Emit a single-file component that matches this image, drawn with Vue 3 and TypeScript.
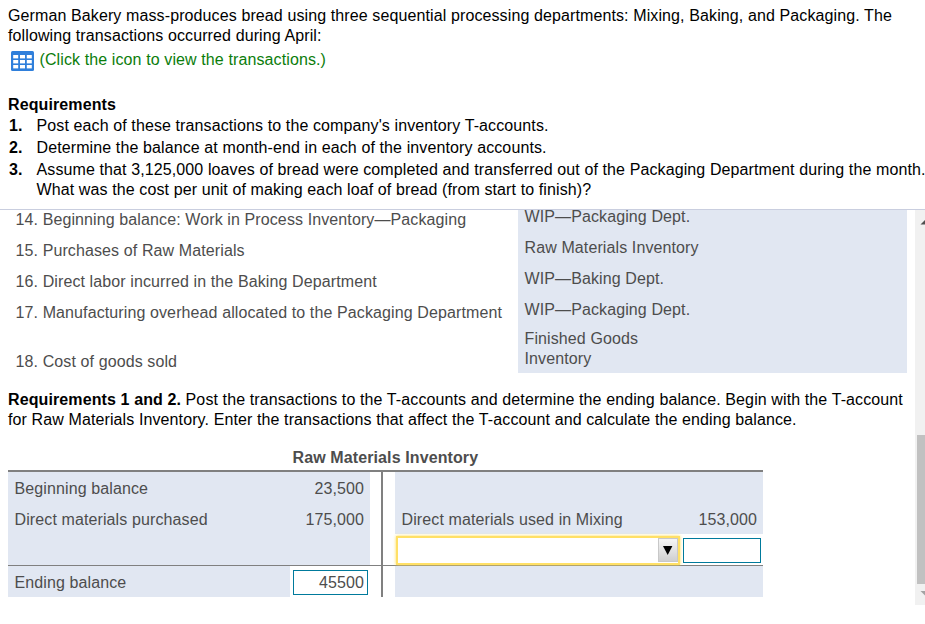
<script setup lang="ts">
import { ref } from 'vue'

interface Transaction {
  label: string
  account: string[]
}

const requirements: string[][] = [
  ["Post each of these transactions to the company's inventory T-accounts."],
  ['Determine the balance at month-end in each of the inventory accounts.'],
  [
    'Assume that 3,125,000 loaves of bread were completed and transferred out of the Packaging Department during the month.',
    'What was the cost per unit of making each loaf of bread (from start to finish)?',
  ],
]

const transactions: Transaction[] = [
  { label: '14. Beginning balance: Work in Process Inventory—Packaging', account: ['WIP—Packaging Dept.'] },
  { label: '15. Purchases of Raw Materials', account: ['Raw Materials Inventory'] },
  { label: '16. Direct labor incurred in the Baking Department', account: ['WIP—Baking Dept.'] },
  { label: '17. Manufacturing overhead allocated to the Packaging Department', account: ['WIP—Packaging Dept.'] },
  { label: '18. Cost of goods sold', account: ['Finished Goods', 'Inventory'] },
]

const endingBalance = ref('45500')
const creditAmount = ref('')
</script>

<template>
  <div class="page">
    <header class="problem">
      <p class="para">
        German Bakery mass-produces bread using three sequential processing departments: Mixing, Baking, and Packaging. The<br />
        following transactions occurred during April:
      </p>
      <div class="link">
        <svg class="grid-icon" width="23" height="20" viewBox="0 0 23 20">
          <rect width="23" height="20" rx="1.5" fill="#2f7fdb" />
          <g fill="#fff">
            <template v-for="y in [4, 9, 14]" :key="y">
              <rect v-for="x in [2.2, 9, 15.8]" :key="x" :x="x" :y="y" width="5" height="3.4" />
            </template>
          </g>
        </svg>
        <span>(Click the icon to view the transactions.)</span>
      </div>
      <h2 class="heading">Requirements</h2>
      <ol class="reqs">
        <li v-for="(lines, i) in requirements" :key="i">
          <b>{{ i + 1 }}.</b>
          <div><div v-for="line in lines" :key="line">{{ line }}</div></div>
        </li>
      </ol>
    </header>

    <div class="work">
      <main class="content">
        <div class="transactions">
          <div v-for="t in transactions" :key="t.label" class="trow">
            <div class="tlabel">{{ t.label }}</div>
            <div class="taccount"><div v-for="a in t.account" :key="a">{{ a }}</div></div>
          </div>
        </div>

        <p class="instructions">
          <b>Requirements 1 and 2.</b> Post the transactions to the T-accounts and determine the ending balance. Begin with the T-account<br />
          for Raw Materials Inventory. Enter the transactions that affect the T-account and calculate the ending balance.
        </p>

        <section class="account">
          <h3>Raw Materials Inventory</h3>
          <div class="ledger">
            <div class="side entries debit">
              <div class="line"><span>Beginning balance</span><span>23,500</span></div>
              <div class="line"><span>Direct materials purchased</span><span>175,000</span></div>
            </div>
            <div class="stem"></div>
            <div class="side entries credit">
              <div class="line"></div>
              <div class="line"><span>Direct materials used in Mixing</span><span>153,000</span></div>
              <div class="entry">
                <div class="select"><button type="button"><svg width="10" height="9" viewBox="0 0 10 9"><path d="M0 0H9.4L4.7 9Z" /></svg></button></div>
                <input v-model="creditAmount" />
              </div>
            </div>
          </div>
          <div class="ledger total">
            <div class="side debit">
              <div class="ending">Ending balance</div>
              <div class="answer"><input v-model="endingBalance" /></div>
            </div>
            <div class="stem"></div>
            <div class="side credit"></div>
          </div>
        </section>
      </main>
      <div class="scrollbar">
        <div class="arrow"><svg width="10" height="20"><path d="M5.5 14.5L10 10V14.5Z" fill="#505050" /></svg></div>
        <div class="track"></div>
        <div class="thumb"></div>
        <div class="arrow"><svg width="10" height="21"><path d="M5.5 7H10V11.5Z" fill="#a3a3a3" /></svg></div>
      </div>
    </div>
  </div>
</template>

<style>
body { background: #fff; overflow: hidden; }
</style>

<style scoped>
* { box-sizing: border-box; }
.page {
  width: 925px;
  height: 624px;
  overflow: hidden;
  font: 16px/20px "Liberation Sans", Arial, sans-serif;
  letter-spacing: 0.11px;
  color: #000;
  white-space: nowrap;
}
p, h2, h3, ol { margin: 0; padding: 0; }
.problem { height: 210px; padding: 6px 0 0 8px; border-bottom: 1px solid #c9cedf; }
.link { display: flex; padding: 4px 0 0 3px; height: 25px; color: #0b7d0b; }
.link span { margin-left: 5.5px; }
.grid-icon { margin-top: 1px; }
.heading { font-size: 16px; line-height: 20px; margin-top: 24px; }
.reqs { list-style: none; display: grid; row-gap: 2px; margin-top: 1px; }
.reqs li { display: flex; }
.reqs b { width: 28.5px; padding-left: 1px; }
.work { display: flex; height: 395px; }
.content { width: 915px; padding-left: 8px; }
.transactions { width: 899px; color: #4d4d4d; }
.trow { display: flex; height: 31px; }
.trow:first-child { height: 22px; }
.tlabel { width: 510px; padding: 9px 0 0 7.5px; }
.taccount { flex: 1; padding: 6px 0 0 6.5px; background: #e1e7f2; }
.trow:first-child .tlabel { padding-top: 0; }
.trow:first-child .taccount { padding-top: 0; line-height: 14px; }
.trow:last-child { height: 48px; }
.trow:last-child .tlabel { padding-top: 27px; }
.trow:last-child .taccount { padding-top: 4px; }
.instructions { margin-top: 17px; }
.account { width: 755px; margin-top: 18px; color: #4d4d4d; }
h3 { font-size: 16px; line-height: 20px; padding-left: 284.5px; height: 22px; }
.ledger { display: flex; height: 95px; border-top: 2px solid #808080; }
.total { height: 32px; border-top-width: 1px; }
.side { background: #e1e7f2; }
.debit { width: 362px; }
.credit { width: 368px; }
.stem { width: 2px; margin: 0 12px 0 11px; background: #808080; }
.line { display: flex; justify-content: space-between; height: 31px; padding: 7px 6px 0 6.5px; }
.entry { display: flex; height: 31px; background: #fff; padding: 2px 2px 0 1px; }
.select {
  width: 284px;
  height: 29px;
  display: flex;
  justify-content: flex-end;
  border: 2px solid #ffe066;
  box-shadow: 0 0 3px #ffdc50;
}
.select button {
  width: 20px;
  height: 24px;
  padding: 1px 0 0;
  border: 1px solid #c8c8c8;
  background: linear-gradient(#f6f6f6, #cfcfcf);
}
.select svg { display: block; margin: 0 auto; }
input {
  height: 25px;
  padding: 0 3px;
  border: 1px solid #007a9c;
  border-radius: 0;
  background: #fff;
  color: #4d4d4d;
  font: inherit;
  letter-spacing: inherit;
  text-align: right;
  outline: none;
}
.entry input { width: 78px; margin: 2px 0 0 3px; }
.total .debit { display: flex; }
.ending { width: 282px; padding: 7px 6.5px; }
.answer { flex: 1; background: #fff; padding: 4px 2px 0 3px; }
.answer input { width: 75px; display: block; }
.scrollbar { width: 10px; display: flex; flex-direction: column; background: #f1f1f1; }
.arrow { height: 21px; }
.arrow svg { display: block; }
.track { height: 204px; }
.thumb { height: 149px; margin-left: 2px; background: #c1c1c1; }
</style>
